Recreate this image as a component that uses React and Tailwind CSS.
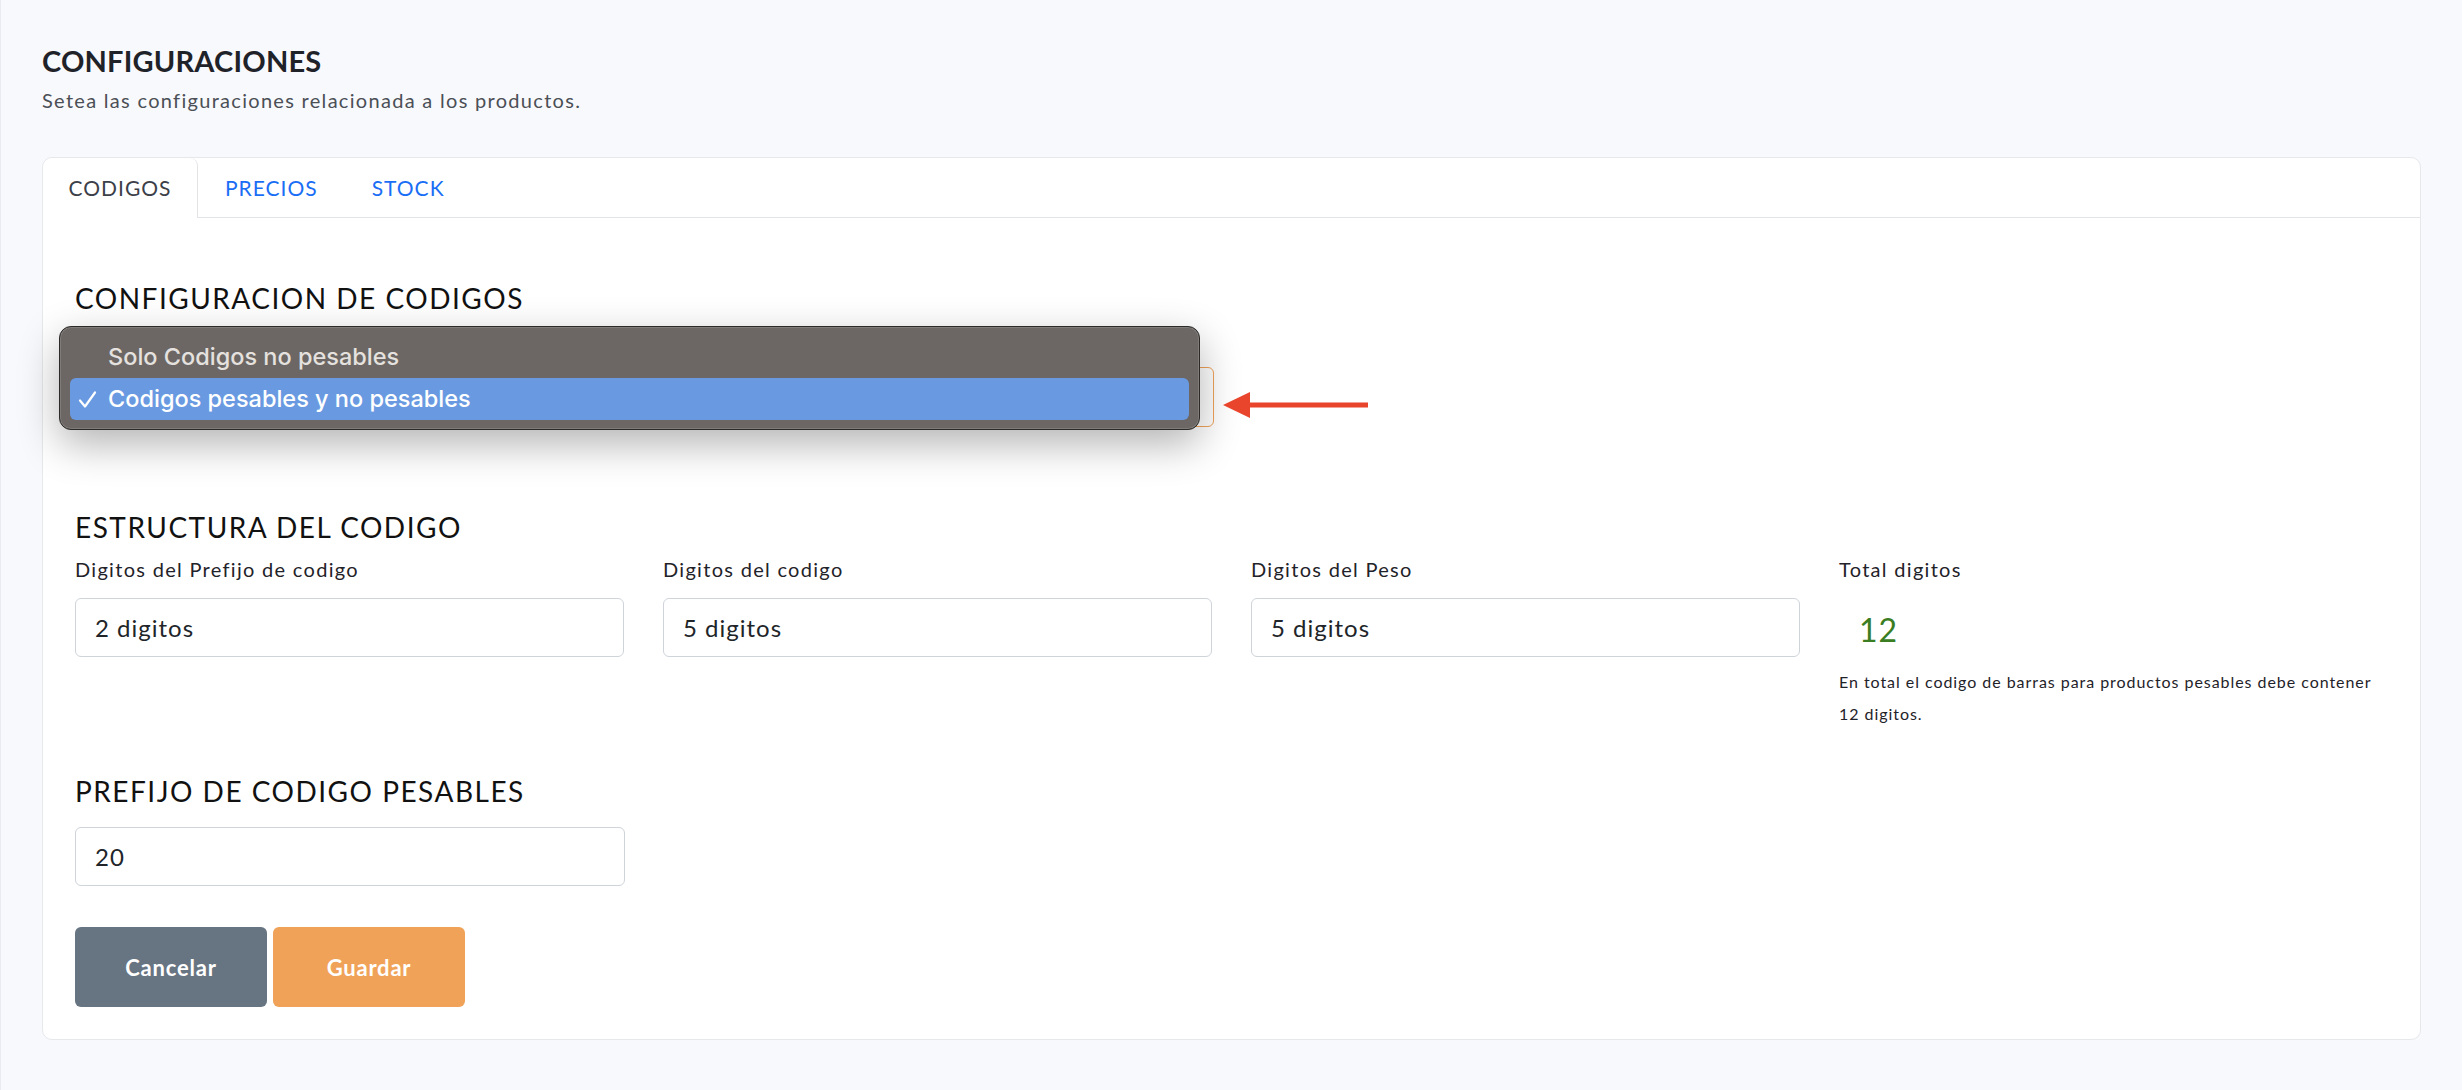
import { useState } from 'react';

const fields = [
  { label: 'Digitos del Prefijo de codigo', value: '2 digitos' },
  { label: 'Digitos del codigo', value: '5 digitos' },
  { label: 'Digitos del Peso', value: '5 digitos' },
];

const options = ['Solo Codigos no pesables', 'Codigos pesables y no pesables'];

const App = () => {
  const [tab, setTab] = useState('codigos');
  const [tipo, setTipo] = useState(options[1]);

  return (
    <div className="min-h-screen bg-[#f8f9fc] border-l border-[#e9ebf0] px-[41px] pt-[43px] pb-[50px] font-['Lato',sans-serif] text-[#212529]">
      {/* Header */}
      <h1 className="text-[29px] leading-[36px] font-bold text-[#1f2329] tracking-[0.2px]">CONFIGURACIONES</h1>
      <p className="mt-[7px] text-[20px] leading-[28px] tracking-[1.3px] text-[#4b4f56]">
        Setea las configuraciones relacionada a los productos.
      </p>

      <div className="mt-[43px] bg-white border border-[#e6e8ec] rounded-[10px]">
        {/* Tabs */}
        <div className="flex h-[60px] border-b border-[#e2e4e8]">
          <TabButton active={tab === 'codigos'} onClick={() => setTab('codigos')} first>
            CODIGOS
          </TabButton>
          <TabButton active={tab === 'precios'} onClick={() => setTab('precios')}>
            PRECIOS
          </TabButton>
          <TabButton active={tab === 'stock'} onClick={() => setTab('stock')}>
            STOCK
          </TabButton>
        </div>

        <div className="px-[32px] pt-[63px] pb-[32px]">
          <SectionTitle>CONFIGURACION DE CODIGOS</SectionTitle>

          {/* Tipo de codigos select, shown open */}
          <div className="relative mt-[52px] w-[1139px]">
            <div className="h-[60px] border border-[#f0a35a] rounded-[6px] bg-white" />

            <div className="absolute left-[-16px] top-[-41px] w-[1141px] h-[104px] rounded-[12px] bg-[#6c6764] border border-[#2b2a29] shadow-[inset_0_0_0_1px_rgba(255,255,255,0.14),0_14px_40px_rgba(0,0,0,0.3)] px-[10px] pt-[9px] font-['Inter',sans-serif]">
              {options.map((opt) => {
                const selected = opt === tipo;
                return (
                  <div
                    key={opt}
                    onClick={() => setTipo(opt)}
                    className={`relative h-[42px] flex items-center pl-[38px] rounded-[6px] text-[23.5px] font-medium ${
                      selected ? 'bg-[#699ae1] text-white' : 'text-[#e4e1df]'
                    }`}
                  >
                    {selected && (
                      <svg className="absolute left-[8px] top-[12px]" width="19" height="19" viewBox="0 0 19 19">
                        <path d="M2 10.5 L7 16.5 L17 2.5" fill="none" stroke="white" strokeWidth="2.2" strokeLinecap="round" strokeLinejoin="round" />
                      </svg>
                    )}
                    {opt}
                  </div>
                );
              })}
            </div>

            <svg className="absolute left-[1148px] top-[24px]" width="145" height="28" viewBox="0 0 145 28">
              <polygon points="0,14 27,1 27,27" fill="#e9452c" />
              <rect x="25" y="11.5" width="120" height="5" fill="#e9452c" />
            </svg>
          </div>

          <div className="mt-[83px]">
            <SectionTitle>ESTRUCTURA DEL CODIGO</SectionTitle>
          </div>

          <div className="mt-[11px] grid grid-cols-4 gap-x-[39px]">
            {fields.map((f) => (
              <div key={f.label}>
                <Label>{f.label}</Label>
                <TextInput value={f.value} />
              </div>
            ))}
            <div>
              <Label>Total digitos</Label>
              <p className="mt-[29px] pl-[20px] text-[32px] leading-[36px] tracking-[1px] text-[#3a7d22]">12</p>
              <p className="mt-[18px] text-[16px] leading-[32px] tracking-[0.95px] text-[#1f2329]">
                En total el codigo de barras para productos pesables debe contener
                <br />
                12 digitos.
              </p>
            </div>
          </div>

          <div className="mt-[44px]">
            <SectionTitle>PREFIJO DE CODIGO PESABLES</SectionTitle>
          </div>
          <div className="w-[550px] mt-[19px]">
            <TextInput value="20" />
          </div>

          {/* Actions */}
          <div className="mt-[41px] flex gap-[6px]">
            <button className="w-[192px] h-[80px] rounded-[6px] bg-[#677482] text-white text-[22px] tracking-[0.8px] font-bold">
              Cancelar
            </button>
            <button className="w-[192px] h-[80px] rounded-[6px] bg-[#f0a358] text-white text-[22px] tracking-[0.8px] font-bold">
              Guardar
            </button>
          </div>
        </div>
      </div>
    </div>
  );
};

const TabButton = ({ active, onClick, first, children }) => (
  <button
    onClick={onClick}
    className={`h-[60px] -mb-px text-[21px] tracking-[1px] ${first ? 'w-[155px] rounded-tl-[10px]' : 'px-[27px]'} ${
      active
        ? 'bg-white border-r border-[#e2e4e8] rounded-tr-[8px] text-[#3c4048]'
        : 'text-[#1a6ef5]'
    }`}
  >
    {children}
  </button>
);

const SectionTitle = ({ children }) => (
  <h2 className="text-[28px] leading-[34px] tracking-[1.5px] text-[#111111]">{children}</h2>
);

const Label = ({ children }) => (
  <p className="text-[20px] leading-[28px] tracking-[1.3px] text-[#1f2329]">{children}</p>
);

const TextInput = ({ value }) => (
  <div className="mt-[15px] h-[59px] border border-[#ced4da] rounded-[6px] bg-white pl-[19px] flex items-center text-[24px] tracking-[1px] text-[#212529]">
    {value}
  </div>
);

export default App;
